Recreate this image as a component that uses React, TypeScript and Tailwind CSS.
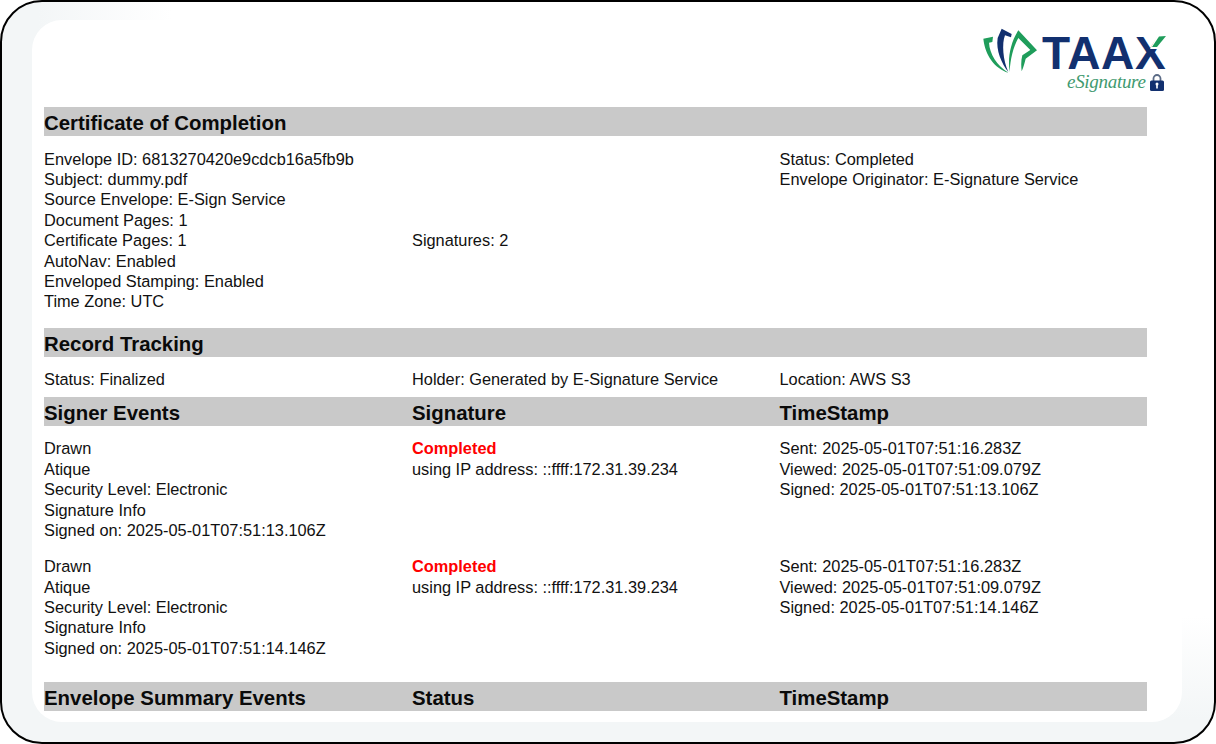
const rowText = 'text-[16.35px] leading-[20.4px] text-[#111]';

function Bar({ cols }: { cols: string[] }) {
  return (
    <div className="grid h-[29px] grid-cols-[368px_367.5px_1fr] items-center bg-[#c9c9c9] pt-[3px] text-[20.4px] font-bold leading-[26px] text-[#0a0a0a]">
      {cols.map((c, i) => (
        <div key={i}>{c}</div>
      ))}
    </div>
  );
}

function Lines({ items }: { items: string[] }) {
  return (
    <div>
      {items.map((t) => (
        <div key={t}>{t}</div>
      ))}
    </div>
  );
}

function Logo() {
  return (
    <div className="relative h-[76px] w-[203px]">
      {/* leaves, drawn over a 3x crop of the logo */}
      <svg className="absolute left-0 top-[-6px]" width="70" height="56" viewBox="0 0 210 168">
        <path d="M25 50 L54 44 L52 60 L42 62 C44 95 65 130 100 152 C60 140 30 100 25 50 Z" fill="#1f9d5b" />
        <path d="M68 48 L80 20 L110 36 L108 46 L90 40 C80 65 84 115 100 150 C80 125 62 85 68 48 Z" fill="#12306f" />
        <path d="M104 150 C98 110 105 65 130 25 L186 85 L152 110 C148 125 146 135 140 148 C138 130 138 115 142 100 L166 84 L130 48 C115 75 106 110 104 150 Z" fill="#1f9d5b" />
      </svg>
      <div className="absolute left-[67px] top-[8px] font-['Liberation_Sans',sans-serif] text-[46px] font-bold leading-[34px] tracking-[0.6px] text-[#12306f]">
        TAAX
      </div>
      <svg className="absolute left-[172px] top-[6px]" width="24" height="16" viewBox="0 0 24 16">
        <path d="M3 15 L11 0 L24 0 L15 15 Z" fill="#fff" />
        <path d="M5 13 L12 2.5 L19 2 L10 13 Z" fill="#1f9d5b" />
      </svg>
      <div className="absolute left-[92px] top-[44px] font-['Liberation_Serif',serif] text-[19px] italic leading-[20px] tracking-[-0.3px] text-[#3f9a70]">
        eSignature
      </div>
      <svg className="absolute left-[175px] top-[46px]" width="14" height="17" viewBox="0 0 14 17">
        <path d="M3.5 8 V4.5 a3.5 3.5 0 0 1 7 0 V8" fill="none" stroke="#5b6b86" strokeWidth="1.8" />
        <rect x="0" y="6.5" width="14" height="10.5" rx="1.5" fill="#12306f" />
        <rect x="6.2" y="9.5" width="1.6" height="5" fill="#fff" />
        <circle cx="7" cy="10" r="1.5" fill="#fff" />
      </svg>
    </div>
  );
}

function SignerRow({ signed }: { signed: string }) {
  return (
    <div className={`grid grid-cols-[368px_367.5px_1fr] ${rowText}`}>
      <Lines items={['Drawn', 'Atique', 'Security Level: Electronic', 'Signature Info', `Signed on: 2025-05-01T07:51:${signed}Z`]} />
      <div>
        <div className="font-bold text-[#f00]">Completed</div>
        <div>using IP address: ::ffff:172.31.39.234</div>
      </div>
      <Lines items={['Sent: 2025-05-01T07:51:16.283Z', 'Viewed: 2025-05-01T07:51:09.079Z', `Signed: 2025-05-01T07:51:${signed}Z`]} />
    </div>
  );
}

export default function App() {
  return (
    <div className="h-[744px] w-[1216px] overflow-hidden bg-white font-['Liberation_Sans',sans-serif]">
      <div className="h-full w-full rounded-[42px] border-2 border-black bg-[linear-gradient(to_right,#f3f6f7_0%,#f3f6f7_3%,#f3f6f700_14%),linear-gradient(to_top,#f3f6f7_0%,#f3f6f7_3%,#f3f6f700_17%)] pb-[20px] pl-[30px] pr-[32px] pt-[18px]">
        <div className="h-[702px] w-[1150px] rounded-[30px] bg-white pl-[12px] pt-[8px]">
          <div className="flex h-[79px] w-[1134px] justify-end">
            <Logo />
          </div>
          <div className="w-[1103px]">
            <Bar cols={['Certificate of Completion']} />
            <div className={`mt-[12.6px] grid grid-cols-[368px_367.5px_1fr] ${rowText}`}>
              <Lines items={['Envelope ID: 6813270420e9cdcb16a5fb9b', 'Subject: dummy.pdf', 'Source Envelope: E-Sign Service', 'Document Pages: 1', 'Certificate Pages: 1', 'AutoNav: Enabled', 'Enveloped Stamping: Enabled', 'Time Zone: UTC']} />
              <div className="pt-[81.6px]">Signatures: 2</div>
              <Lines items={['Status: Completed', 'Envelope Originator: E-Signature Service']} />
            </div>
            <div className="mt-[16.4px]">
              <Bar cols={['Record Tracking']} />
            </div>
            <div className={`mt-[11.4px] grid grid-cols-[368px_367.5px_1fr] ${rowText}`}>
              <div>Status: Finalized</div>
              <div>Holder: Generated by E-Signature Service</div>
              <div>Location: AWS S3</div>
            </div>
            <div className="mt-[7.6px]">
              <Bar cols={['Signer Events', 'Signature', 'TimeStamp']} />
            </div>
            <div className="mt-[12.7px]">
              <SignerRow signed="13.106" />
            </div>
            <div className="mt-[15.9px]">
              <SignerRow signed="14.146" />
            </div>
            <div className="mt-[23.4px]">
              <Bar cols={['Envelope Summary Events', 'Status', 'TimeStamp']} />
            </div>
          </div>
        </div>
      </div>
    </div>
  );
}
